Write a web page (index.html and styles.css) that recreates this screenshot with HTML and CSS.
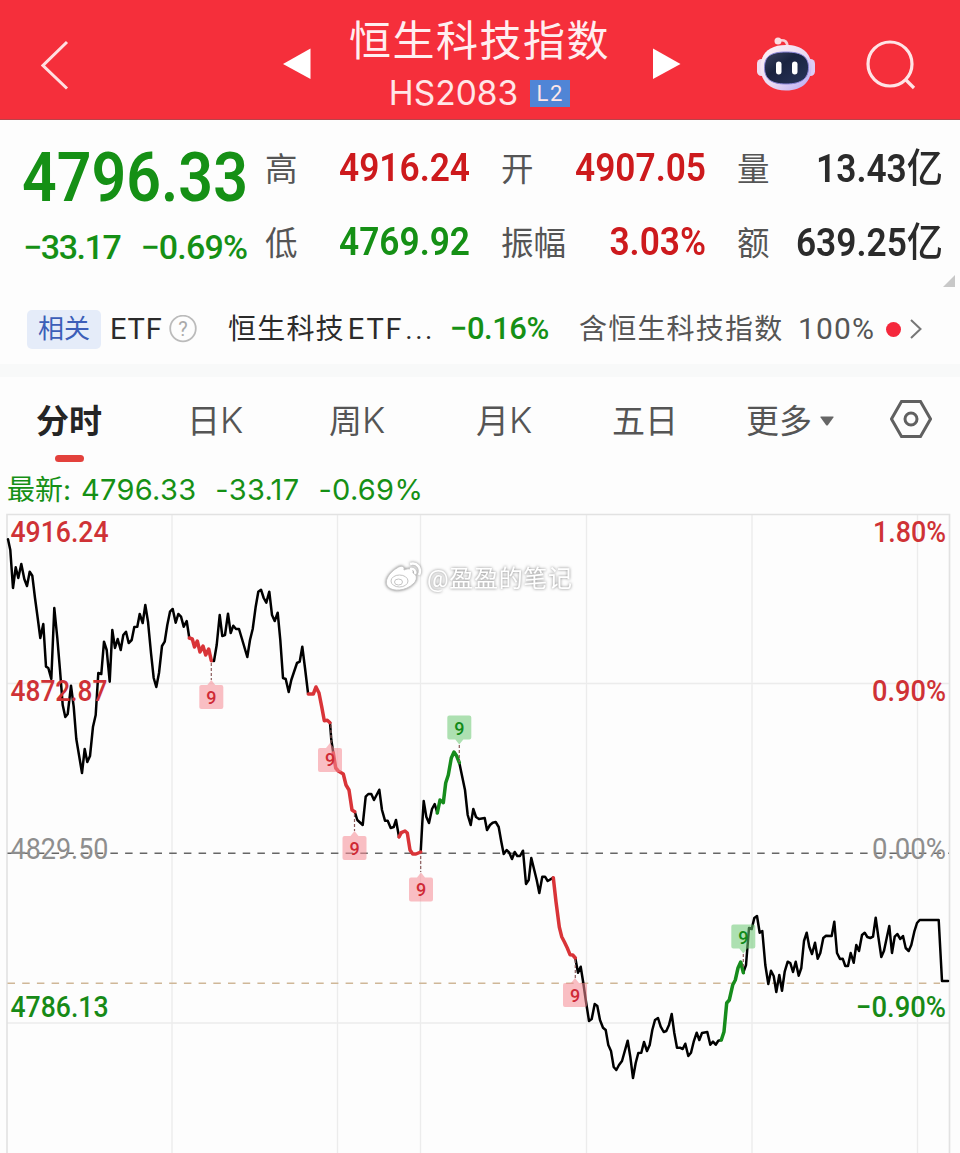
FILE: index.html
```html
<!DOCTYPE html>
<html lang="zh-CN">
<head>
  <meta charset="UTF-8">
  <meta name="viewport" content="width=device-width, initial-scale=1.0">
  <title>恒生科技指数</title>
  <link rel="stylesheet" href="styles.css">
</head>
<body>
  <header class="topbar">
    <svg class="back" width="28" height="50" viewBox="0 0 28 50"><path d="M26 2 2 25.500 26 48.500"/></svg>
    <svg class="arrow" width="28" height="32" viewBox="0 0 28 32"><path d="M0 15 27.500 -0.500V30z"/></svg>
    <div class="title">
      <h1>恒生科技指数</h1>
      <div class="code"><span>HS2083</span><b class="level">L2</b></div>
    </div>
    <svg class="arrow" width="28" height="32" viewBox="0 0 28 32"><path d="M27.500 15 0 -0.500V30z"/></svg>
    <svg class="robot" width="60" height="56" viewBox="0 0 60 56">
      <defs>
        <linearGradient id="shell" x1="0" y1="0" x2="1" y2="1">
          <stop offset="0" stop-color="#fff4f6"/><stop offset=".55" stop-color="#ead9f3"/><stop offset="1" stop-color="#b3a6f2"/>
        </linearGradient>
        <linearGradient id="visor" x1="0" y1="0" x2="1" y2="1">
          <stop offset="0" stop-color="#3a415f"/><stop offset=".4" stop-color="#1a2340"/><stop offset="1" stop-color="#29345a"/>
        </linearGradient>
      </defs>
      <path d="M23 3.500c6-1 8.500 1 8.500 7" fill="none" stroke="#f9cdd5" stroke-width="2.600"/>
      <circle cx="22" cy="4" r="3.500" fill="#fbdde2"/>
      <rect x="1" y="22" width="9" height="17" rx="4.500" fill="#f0dcef"/>
      <rect x="50" y="22" width="9" height="17" rx="4.500" fill="#dccdf5"/>
      <path d="M30 8C14 8 4.500 16 4.500 30S13 53.500 30 53.500s25.500-9.500 25.500-23.500S46 8 30 8z" fill="url(#shell)"/>
      <path d="M30 15C14 15 8.500 20 8.500 30.500S14 47 30 47s22.500-6 22.500-16.500S46 15 30 15z" fill="url(#visor)" stroke="#8b86d9" stroke-width="1"/>
      <rect x="20" y="24.500" width="5.500" height="13" rx="2.750" fill="#fff"/>
      <rect x="36" y="24.500" width="5.500" height="13" rx="2.750" fill="#fff"/>
    </svg>
    <svg class="search" width="50" height="50" viewBox="0 0 50 50"><circle cx="24" cy="24" r="22"/><path d="m39 39 9 9"/></svg>
  </header>

  <section class="quote">
    <div class="price down">4796.33</div>
    <div class="change down"><span>−33.17</span><span>−0.69%</span></div>
    <dl class="stats">
      <dt>高</dt><dd class="up">4916.24</dd>
      <dt>开</dt><dd class="up">4907.05</dd>
      <dt>量</dt><dd>13.43<i>亿</i></dd>
      <dt>低</dt><dd class="down">4769.92</dd>
      <dt>振幅</dt><dd class="up">3.03%</dd>
      <dt>额</dt><dd>639.25<i>亿</i></dd>
    </dl>
    <svg class="corner" width="12" height="12" viewBox="0 0 12 12"><path d="M12 0v12H0z"/></svg>
  </section>

  <section class="related">
    <span class="chip">相关</span>
    <span class="etf">ETF</span>
    <svg class="help" width="28" height="28" viewBox="0 0 28 28"><circle cx="14" cy="13.500" r="12.800"/><text x="14" y="20.500">?</text></svg>
    <span class="fund">恒生科技<em>ETF</em><i>...</i></span>
    <span class="fund-change down">−0.16%</span>
    <span class="holding">含恒生科技指数</span>
    <span class="ratio">100%</span>
    <span class="dot"></span>
    <svg class="more" width="12" height="20" viewBox="0 0 12 20"><path d="m1 1 9.500 9L1 19"/></svg>
  </section>

  <nav class="tabs">
    <a class="active">分时</a>
    <a>日<em>K</em></a>
    <a>周<em>K</em></a>
    <a>月<em>K</em></a>
    <a>五日</a>
    <a>更多<svg class="caret" width="14" height="10" viewBox="0 0 14 10"><path d="M1 .5h12q1 0 .4 1L8 9q-1 1-2 0L.600 1.500Q0 .5 1 .5z"/></svg></a>
    <svg class="settings" width="42" height="38" viewBox="0 0 42 38"><path d="M11.500 1.500h19L40.500 19l-10 17.500h-19L1.500 19z"/><circle cx="21" cy="19" r="6"/></svg>
  </nav>

  <div class="latest down"><b>最新:</b><span>4796.33</span><span>-33.17</span><span>-0.69%</span></div>

  <svg class="chart" width="960" height="643" viewBox="0 510 960 643">
    <defs>
      <symbol id="pin-up" viewBox="0 0 24 30" overflow="visible">
        <path d="M2 6h6l4-5 4 5h6q2 0 2 2v20q0 2-2 2H2q-2 0-2-2V8q0-2 2-2z"/>
      </symbol>
      <symbol id="pin-down" viewBox="0 0 24 30" overflow="visible">
        <path d="M2 0h20q2 0 2 2v20q0 2-2 2h-6l-4 5-4-5H2q-2 0-2-2V2q0-2 2-2z"/>
      </symbol>
    </defs>

    <!-- grid -->
    <g class="grid">
      <path d="M172 514V1153M337.500 514V1153M420.500 514V1153M586.500 514V1153M752 514V1153M917.500 514V1153M7 683.500H949M7 1023H949"/>
      <path class="frame" d="M7 1153V514.500H949.500V1153"/>
    </g>
    <path class="base" d="M7.500 853.200H949"/>
    <path class="last" d="M7.500 983.200H940"/>

    <!-- price line -->
    <g class="line">
      <polyline points="8,539.300 10.300,550 13,588 15.700,567.300 18.300,578 21.300,564 24.300,579 27,586 29.700,571.700 32.300,575.700 35,598 37.700,618 40.300,638 43.300,624 46,666.700 48.300,668 51.300,679 54.300,608 57.300,638 60,670 62.700,705 65.300,717 67.700,714 71,685.700 73.700,706.700 76.300,739 82,773 84.700,749 87.300,762 90,756 93,726.700 95.700,715 98.300,673 101.300,674 104,641.700 106.700,650 109.700,681.700 112.300,630 115,648 117.700,639 120.700,650 123.300,635 126,631.700 128.700,643 131.700,640 134.300,627 137.300,626.700 139.700,614 142.700,623 145.300,605 148,621.700 151,653 153.700,678 156.300,687 159,673 162,646 164.700,641.700 167.300,625 170,611.700 172.700,609 175.700,622.700 178.300,614 181,616.700 183.700,626.700 186.700,621 189.300,638"/>
      <polyline points="211.300,660.700 214,661 216.700,645 219.700,615 222.300,636 225,635 228,613.700 230.700,633 233.300,625.700 236,629 239,629 241.700,638 247.300,657 250,640 252.700,629 255.700,606.700 258.300,591.700 261,589.700 263.700,598 266.300,602.700 269.300,591.700 272,615 274.700,621 277.700,612.700 280.300,640 283,678 285.700,679 288.700,692 291.300,680 297,663 299.700,661.700 302.300,646.700 305,668 308,693"/>
      <polyline points="330,722.700 331.300,740 333.300,753"/>
      <polyline points="354.700,811.700 357.300,820 362.700,825 365.700,796.700 368.300,794 371.300,794 374,800 379.300,789.700 382,810 385,820.700 387.700,820.700 390.700,828 393.700,827 396,820 399,837"/>
      <polyline points="420.700,852 422.300,823 423.700,801 426.300,816.700 429,823 432,809 434.700,804 437.300,813"/>
      <polyline points="459.300,762.700 465,790 467.700,815 470.700,825 473.300,809 476,817 479,819 484.700,818 487,830 490,825 492.700,822.700 495.700,822 498.700,827 501.300,841.700 503.700,854 506.700,850 509.300,852.700 512,859 514.700,852 517.300,856 520,856 523,850.700 526,884 528.700,880 531.300,858 536.700,880 539.300,893 542.300,876.700 545,876.700 547.700,881 553.300,877.700"/>
      <polyline points="575.300,958 578,972.700 580.700,966.700 583.300,983 586,1001.700 589,1021 591.700,1019 594.700,1004 597.300,1006 600,1020 603,1027.700 605.700,1030 608.300,1045 611,1051 613.700,1067 616.300,1070 619,1065 622,1061 627.700,1040.700 630.300,1056.700 633,1078 635.700,1063 638.300,1053 641.300,1052.700 644,1042 647,1051 649.700,1045 652.300,1030 655,1020 658,1018 660.700,1026.700 663.700,1032 666.300,1031 669,1025 671.700,1014 674.300,1033 677,1047.700 680,1047.700 682.700,1049 685.300,1043.700 688.300,1056 691,1052.700 693.700,1041.700 696.700,1032.700 699.300,1040 702,1033 707.300,1032 710.300,1044.700 713,1041.700 715.700,1044.700 718.300,1040.700 721.300,1040"/>
      <polyline points="743.300,972.700 746,965 749,928 751.700,929 754.300,918 757,916 759.700,932.700 762.300,931 765.300,965 768.300,984 771,970.700 773.700,976 776.300,992 779.300,975 782,990.700 784.700,971.700 787.700,961.700 790.300,963 793,972 795.700,961.700 798.700,975.700 801.300,968 804,941 806.700,932.700 809.300,946.700 812,954 815,942.700 817.700,958.700 820.300,953 823.300,938 826,935.700 831.700,936 834.300,921.700 837,953 840,959 842.700,958.700 845.300,966 848,966 850.700,953 853.700,962.700 856.300,945 859,951 862,935 864.700,932.700 867.300,937 870.300,938 873,936.700 875.700,917.700 878.300,936.700 881.300,957 884,950.700 886.700,938 889.300,926 892,953 894.700,936.700 897.300,934 900.300,939 903,936 905.700,948 908.700,951 911.300,945 914.300,931.700 917,923 919.700,920 938.700,920 942,981 948,981"/>
    </g>
    <g class="line run-down">
      <polyline points="189.300,638 192.300,639 194.500,647 197.300,641 200,652 203,646 205.700,655 208.700,649 211.300,660.700"/>
      <polyline points="308.300,694 313.300,694 316,687 319,693 321.700,706.700 324.300,720.700 327.300,720.300 330,722.700"/>
      <polyline points="333.300,753 335.700,768 338.300,771 343.300,774 346,785 349,790 352,810 354.700,811.700"/>
      <polyline points="399,837 401.300,832.700 405,831 407.300,833 410,850 412.700,854 416,854 420.700,852"/>
      <polyline points="553.300,877.700 556,901.700 559.300,927 561.700,936.700 564.300,941.700 567.300,948 570,954.700 572.700,955 575.300,958"/>
    </g>
    <g class="line run-up">
      <polyline points="437.300,813 440,800 443.300,802.700 445.700,783 448.300,775 451.300,758 454,752 456.700,756 459.300,762.700"/>
      <polyline points="721.300,1040 724,1031.700 726.700,1003 729.300,1000 732.700,985 735.300,980 738,968 740.700,962 743.300,972.700"/>
    </g>

    <!-- nine-count signals -->
    <path class="stem" d="M211.300 663V680M331 725V744M354.500 814V831M420.700 856V872M575.300 960V978M459.300 745V762M743.300 954V968"/>
    <g class="pins pins-red">
      <use href="#pin-up" x="199.300" y="679" width="24" height="30"/><text x="211.300" y="703.500">9</text>
      <use href="#pin-up" x="318" y="742" width="24" height="30"/><text x="330" y="766">9</text>
      <use href="#pin-up" x="342.500" y="830" width="24" height="30"/><text x="354.500" y="854.500">9</text>
      <use href="#pin-up" x="409" y="871.500" width="24" height="30"/><text x="421" y="896">9</text>
      <use href="#pin-up" x="563" y="977" width="24" height="30"/><text x="575" y="1001.500">9</text>
    </g>
    <g class="pins pins-green">
      <use href="#pin-down" x="447.300" y="715.500" width="24" height="30"/><text x="459.300" y="734.500">9</text>
      <use href="#pin-down" x="731.300" y="924.500" width="24" height="30"/><text x="743.300" y="943.500">9</text>
    </g>

    <!-- axis labels -->
    <g class="axis">
      <text class="red" x="10.500" y="542" textLength="98" lengthAdjust="spacingAndGlyphs">4916.24</text>
      <text class="red" x="10.500" y="700.500" textLength="97" lengthAdjust="spacingAndGlyphs">4872.87</text>
      <text class="gray" x="10.500" y="858.500" textLength="98" lengthAdjust="spacingAndGlyphs">4829.50</text>
      <text class="green" x="10.500" y="1016.500" textLength="98" lengthAdjust="spacingAndGlyphs">4786.13</text>
      <text class="red" x="873" y="542" textLength="73" lengthAdjust="spacingAndGlyphs">1.80%</text>
      <text class="red" x="872" y="700.500" textLength="74" lengthAdjust="spacingAndGlyphs">0.90%</text>
      <text class="gray" x="872" y="858.500" textLength="74" lengthAdjust="spacingAndGlyphs">0.00%</text>
      <text class="green" x="856" y="1016.500" textLength="90" lengthAdjust="spacingAndGlyphs">−0.90%</text>
    </g>

    <!-- weibo watermark -->
    <g class="mark">
      <path d="M397 568c4-3 8-2 7 2 4-2 10-2 9 3 5 2 4 8 0 11-7 7-20 8-25 3-5-6 2-15 9-19z"/>
      <ellipse cx="399.500" cy="581" rx="8.500" ry="6"/>
      <ellipse cx="398.500" cy="582" rx="4" ry="3"/>
      <path class="wave" d="M410 564c7-2 12 4 9 11M410 569c4-1 6 2 5 5"/>
      <text x="427" y="587" textLength="145">@盈盈的笔记</text>
    </g>
  </svg>
</body>
</html>
```
FILE: styles.css
```css
* { margin: 0; padding: 0; box-sizing: border-box; }
body {
  width: 960px;
  height: 1153px;
  overflow: hidden;
  background: #fdfdfd;
  color: #2b2b2b;
  font-family: Roboto, "Noto Sans CJK SC", sans-serif;
}
em, i { font-style: normal; }
.up { color: #cd1a1d; }
.down { color: #159015; }

/* Top bar */
.topbar {
  display: flex;
  align-items: center;
  height: 120px;
  background: #f52f3b;
  border-bottom: 1px solid #b8434a;
  padding: 10px 0 0 41px;
  color: #fff;
}
.back { fill: none; stroke: #ffdfe1; stroke-width: 3; }
.arrow { fill: #fff; overflow: visible; }
.back + .arrow { margin-left: 214px; }
.title {
  width: 342px;
  text-align: center;
  margin-top: -6px;
  padding-right: 5px;
}
.title h1 {
  font: 400 42px/54px "Noto Sans CJK SC", sans-serif;
  letter-spacing: 1.5px;
  color: #ffeef0;
  margin-top: -1px;
}
.code {
  display: flex;
  align-items: center;
  justify-content: center;
  gap: 12px;
  height: 38px;
  margin-top: 9px;
  font: 33.5px/38px Inter, sans-serif;
  color: #ffe6e8;
}
.level {
  width: 40px;
  height: 27px;
  margin-top: 1px;
  background: #5085d6;
  font: 22px/27px Roboto, sans-serif;
  letter-spacing: 1.5px;
}
.robot { margin-left: 75px; }
.search {
  margin-left: 50px;
  fill: none;
  stroke: #ffe4e6;
  stroke-width: 3.2;
}

/* Quote */
.quote {
  position: relative;
  display: grid;
  grid-template-columns: 242px 1fr;
  grid-template-rows: 93px 50px;
  height: 174px;
  padding: 12px 17px 0 23px;
}
.price {
  font-size: 68px;
  line-height: 93px;
  font-weight: 600;
  margin-left: -1px;
  transform: scaleX(.895);
  transform-origin: left;
}
.change {
  display: flex;
  gap: 20px;
  font-size: 34px;
  line-height: 44px;
  font-weight: 500;
  letter-spacing: -1.4px;
  white-space: nowrap;
}
.change span + span { letter-spacing: -.8px; }
.stats {
  grid-column: 2;
  grid-row: 1 / 3;
  display: grid;
  grid-template-columns: 50px 155px 81px 155px 49px 1fr;
  grid-template-rows: 74px 74px;
  align-items: center;
}
.stats dt:nth-of-type(3n + 2),
.stats dt:nth-of-type(3n) { margin-left: 31px; }
.stats dt {
  padding-bottom: 5px;
  font: 32.5px/40px "Noto Sans CJK SC", sans-serif;
  color: #555;
  white-space: nowrap;
}
.stats dd {
  font-size: 39px;
  line-height: 44px;
  padding-bottom: 2px;
  font-weight: 600;
  text-align: right;
  white-space: nowrap;
  transform: scaleX(.905);
  transform-origin: right;
}
.stats dd i {
  font: 500 40px/40px "Noto Sans CJK SC", sans-serif;
}
.corner {
  position: absolute;
  right: 5px;
  bottom: 7px;
  fill: #c8c8c8;
}

/* Related ETF */
.related {
  display: flex;
  align-items: center;
  height: 83px;
  padding-left: 27px;
  border-bottom: 13px solid #f8f9f9;
  font-size: 28px;
  line-height: 40px;
  white-space: nowrap;
}
.chip {
  width: 74px;
  height: 39px;
  border-radius: 5px;
  background: #e5ecf9;
  color: #3c5eb8;
  font-size: 26px;
  line-height: 39px;
  text-align: center;
}
.etf { width: 59px; margin-left: 9px; font-size: 29px; letter-spacing: .8px; }
.help { fill: none; stroke: #bbb; stroke-width: 1.8; }
.help text { font-size: 20px; text-anchor: middle; fill: #aaa; stroke: none; }
.fund { width: 222px; margin-left: 31px; padding-top: 1px; letter-spacing: 1.2px; }
.fund em { margin-left: 3px; letter-spacing: 1.8px; font-size: 29px; }
.fund i { margin-left: 2px; letter-spacing: 2.5px; }
.fund-change { width: 129px; font-size: 31px; font-weight: 500; letter-spacing: -.5px; }
.holding { width: 219px; padding-top: 2px; letter-spacing: 1.2px; color: #555; }
.ratio { width: 88px; color: #555; font-size: 30px; letter-spacing: 1.1px; }
.dot { width: 15px; height: 15px; border-radius: 50%; background: #f5283c; }
.more { margin-left: 9px; fill: none; stroke: #777; stroke-width: 2; }

/* Period tabs */
.tabs {
  display: grid;
  grid-template-columns: 151px 142px 147px 136px 134px 144px 42px;
  align-items: center;
  height: 95px;
  padding: 0 0 11px 36px;
  color: #555;
}
.tabs a {
  position: relative;
  font: 33px/48px "Noto Sans CJK SC", sans-serif;
  white-space: nowrap;
}
.tabs em { font: 300 36px/40px Inter, sans-serif; }
.tabs .active { color: #252525; font-weight: 700; }
.tabs .active::after {
  content: "";
  position: absolute;
  left: 19px;
  bottom: -19px;
  width: 29px;
  height: 7px;
  border-radius: 4px;
  background: #e3413c;
}
.caret { margin: 0 0 7px 8px; fill: #666; }
.settings { fill: none; stroke: #606060; stroke-width: 3; }

/* Latest line */
.latest {
  display: flex;
  height: 38px;
  padding-left: 7px;
  font: 29px/36px Inter, "Noto Sans CJK SC", sans-serif;
  letter-spacing: .3px;
}
.latest b { width: 74px; font-size: 28px; line-height: 37px; font-weight: 400; letter-spacing: 0; }
.latest span { margin-right: 19px; }

/* Chart */
.chart { display: block; }
.grid path { fill: none; stroke: #ececec; stroke-width: 1.3; }
.grid .frame { stroke: #e2e2e2; stroke-width: 1.6; }
.base { stroke: #666; stroke-width: 1.5; stroke-dasharray: 7.5 7.2; }
.last { stroke: #cfb798; stroke-width: 1.5; stroke-dasharray: 7.5 7.2; }
.line { fill: none; stroke: #000; stroke-width: 2.5; stroke-linejoin: round; stroke-linecap: round; }
.run-down { stroke: #d93438; stroke-width: 3.5; }
.run-up { stroke: #168c1c; stroke-width: 3.5; }
.stem { stroke: #8a5a5a; stroke-width: 1.2; stroke-dasharray: 3 2; }
.pins { font: 500 18px Roboto, sans-serif; text-anchor: middle; }
.pins-red use { fill: #f58a93; fill-opacity: .55; }
.pins-red text { fill: #cf2a35; }
.pins-green use { fill: #6cc873; fill-opacity: .55; }
.pins-green text { fill: #128a18; }
.axis { font: 500 29px Roboto, sans-serif; }
.axis .red { fill: #cf3236; }
.axis .gray { fill: #8e8e8e; font-weight: 400; }
.axis .green { fill: #178a17; }
.mark { filter: drop-shadow(0 0 1.5px rgba(0, 0, 0, .5)); }
.mark path, .mark ellipse { fill: #fff; stroke: #c4c4c4; stroke-width: 1; }
.mark .wave { fill: none; stroke: #fff; stroke-width: 2.5; }
.mark text { font: 24px Roboto, "Noto Sans CJK SC", sans-serif; fill: #fff; }
```
